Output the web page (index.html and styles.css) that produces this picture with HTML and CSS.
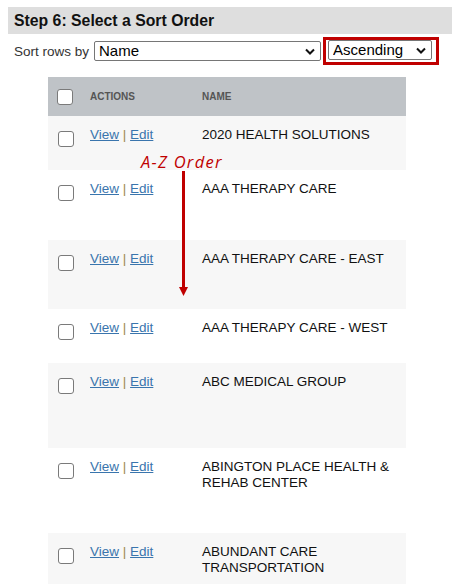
FILE: index.html
```html
<!DOCTYPE html>
<html lang="en">
  <head>
    <meta charset="UTF-8" />
    <meta name="viewport" content="width=device-width, initial-scale=1.0" />
    <title>Select a Sort Order</title>
    <link rel="stylesheet" href="styles.css">
  </head>
  <body>
    <div class="step-title">Step 6: Select a Sort Order</div>

    <div class="sort-bar">
      <label for="sortField">Sort rows by</label>
      <div class="select-wrap field">
        <select id="sortField">
          <option>Name</option>
        </select>
        <svg class="chevron" width="10" height="7" viewBox="0 0 10 7"><path d="M1 1.5 L5 5.5 L9 1.5" /></svg>
      </div>
      <div class="highlight">
        <div class="select-wrap direction">
          <select id="sortDir">
            <option>Ascending</option>
          </select>
          <svg class="chevron" width="10" height="7" viewBox="0 0 10 7"><path d="M1 1.5 L5 5.5 L9 1.5" /></svg>
        </div>
      </div>
    </div>

    <div class="results">
      <table class="grid">
        <colgroup>
          <col class="col-check" />
          <col class="col-actions" />
          <col class="col-name" />
        </colgroup>
        <thead>
          <tr>
            <th class="cell-check"><input type="checkbox" /></th>
            <th class="cell-actions">ACTIONS</th>
            <th class="cell-name">NAME</th>
          </tr>
        </thead>
        <tbody>
          <tr class="h54">
            <td class="cell-check"><input type="checkbox" /></td>
            <td class="cell-actions"><a href="#">View</a> <span class="sep">|</span> <a href="#">Edit</a></td>
            <td class="cell-name">2020 HEALTH SOLUTIONS</td>
          </tr>
          <tr class="h70">
            <td class="cell-check"><input type="checkbox" /></td>
            <td class="cell-actions"><a href="#">View</a> <span class="sep">|</span> <a href="#">Edit</a></td>
            <td class="cell-name">AAA THERAPY CARE</td>
          </tr>
          <tr class="h69">
            <td class="cell-check"><input type="checkbox" /></td>
            <td class="cell-actions"><a href="#">View</a> <span class="sep">|</span> <a href="#">Edit</a></td>
            <td class="cell-name">AAA THERAPY CARE - EAST</td>
          </tr>
          <tr class="h54">
            <td class="cell-check"><input type="checkbox" /></td>
            <td class="cell-actions"><a href="#">View</a> <span class="sep">|</span> <a href="#">Edit</a></td>
            <td class="cell-name">AAA THERAPY CARE - WEST</td>
          </tr>
          <tr class="h85">
            <td class="cell-check"><input type="checkbox" /></td>
            <td class="cell-actions"><a href="#">View</a> <span class="sep">|</span> <a href="#">Edit</a></td>
            <td class="cell-name">ABC MEDICAL GROUP</td>
          </tr>
          <tr class="h85">
            <td class="cell-check"><input type="checkbox" /></td>
            <td class="cell-actions"><a href="#">View</a> <span class="sep">|</span> <a href="#">Edit</a></td>
            <td class="cell-name">ABINGTON PLACE HEALTH &amp; REHAB CENTER</td>
          </tr>
          <tr class="h70">
            <td class="cell-check"><input type="checkbox" /></td>
            <td class="cell-actions"><a href="#">View</a> <span class="sep">|</span> <a href="#">Edit</a></td>
            <td class="cell-name">ABUNDANT CARE TRANSPORTATION</td>
          </tr>
        </tbody>
      </table>

      <!-- annotation drawn over the table -->
      <span class="note-text">A-Z Order</span>
      <svg class="note-arrow" width="9" height="125" viewBox="0 0 9 125">
        <rect x="3" y="0" width="3" height="117" />
        <polygon points="0,116 9,116 4.5,125" />
      </svg>
    </div>
  </body>
</html>
```

FILE: styles.css
```css
body {
  font-family: "Liberation Sans", Arial, sans-serif;
  margin: 7px 8px;
  color: #222;
  background: #fff;
}

.step-title {
  width: 444px;
  height: 27px;
  line-height: 27px;
  padding-left: 6px;
  box-sizing: border-box;
  background: #dedede;
  font-size: 15.8px;
  font-weight: bold;
  color: #111;
}

.sort-bar {
  display: flex;
  align-items: center;
  height: 28px;
  margin-top: 3px;
  font-size: 13.5px;
}

.sort-bar label {
  margin-left: 6px;
  margin-right: 5px;
  color: #333;
}

.select-wrap {
  position: relative;
  height: 20px;
}

.select-wrap select {
  appearance: none;
  -webkit-appearance: none;
  width: 100%;
  height: 20px;
  margin: 0;
  padding: 0 22px 0 4px;
  border: 1px solid #767676;
  border-radius: 2px;
  background: #fff;
  color: #000;
  font-family: "Liberation Sans", Arial, sans-serif;
  font-size: 15px;
  line-height: 18px;
}

.select-wrap.field {
  width: 227px;
}

.select-wrap.direction {
  width: 104px;
}

.chevron {
  position: absolute;
  right: 6px;
  top: 7px;
  pointer-events: none;
}

.chevron path {
  fill: none;
  stroke: #111;
  stroke-width: 2;
}

.highlight {
  margin-left: 2px;
  padding: 0 4px 2px 2px;
  border: 3px solid #c00000;
}

.results {
  position: relative;
  margin: 12px 0 0 40px;
  width: 358px;
}

.grid {
  width: 358px;
  border-collapse: collapse;
  table-layout: fixed;
  font-size: 13.5px;
}

.col-check { width: 36px; }
.col-actions { width: 110px; }
.col-name { width: 212px; }

.grid input[type="checkbox"] {
  appearance: none;
  -webkit-appearance: none;
  width: 16px;
  height: 16px;
  margin: 0;
  box-sizing: border-box;
  border: 1.5px solid #7a7a7a;
  border-radius: 3px;
  background: #fff;
  display: block;
}

.grid th {
  height: 39px;
  padding: 0;
  background: #bfc3c7;
  text-align: left;
  vertical-align: middle;
  font-size: 10px;
  font-weight: bold;
  color: #555;
}

.grid td {
  padding: 11px 0 0 0;
  vertical-align: top;
  line-height: 16px;
  color: #111;
}

.grid tbody tr:nth-child(odd) {
  background: #f7f7f7;
}

.grid th.cell-check {
  padding-left: 9px;
}

.grid td.cell-check {
  padding-left: 10px;
}

.grid td.cell-check input {
  margin-top: 4px;
}

.grid .cell-actions {
  padding-left: 6px;
}

.grid .cell-name {
  padding-left: 8px;
  padding-right: 6px;
}

.cell-actions a {
  color: #3a75ad;
  text-decoration: underline;
}

.sep {
  color: #a08a50;
}

.h54 { height: 54px; }
.h69 { height: 69px; }
.h70 { height: 70px; }
.h85 { height: 85px; }

.note-text {
  position: absolute;
  left: 93px;
  top: 75px;
  font-family: "Open Sans", sans-serif;
  font-style: italic;
  font-size: 16.5px;
  letter-spacing: 1.3px;
  line-height: 20px;
  color: #c00000;
}

.note-arrow {
  position: absolute;
  left: 131px;
  top: 94px;
  fill: #c00000;
}
```
